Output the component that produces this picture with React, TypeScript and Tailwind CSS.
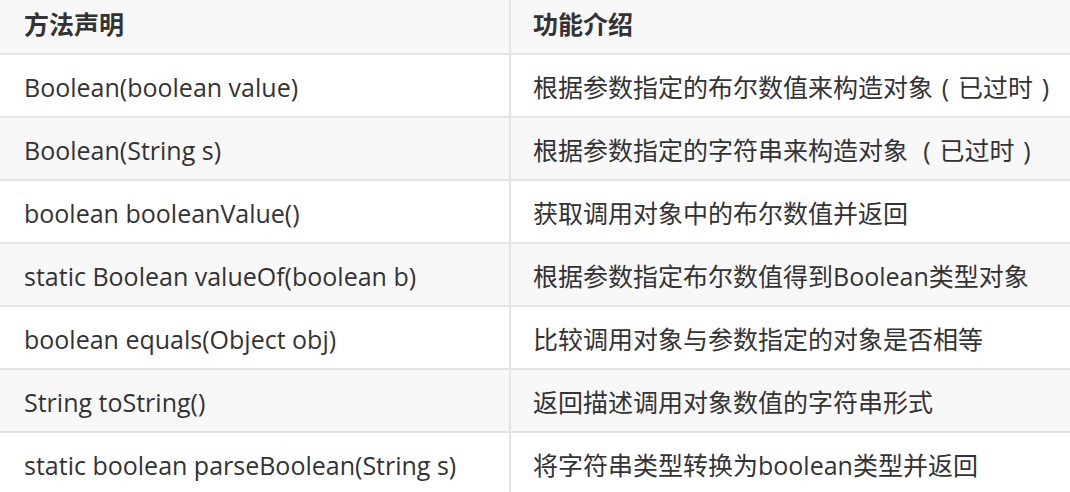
import React from "react";

const Paren: React.FC<{ ch: string }> = ({ ch }) => (
  <span className="inline-block w-[1em] text-center">{ch}</span>
);

const rows: [string, React.ReactNode][] = [
  [
    "Boolean(boolean value)",
    <>
      根据参数指定的布尔数值来构造对象<Paren ch="(" />已过时<Paren ch=")" />
    </>,
  ],
  [
    "Boolean(String s)",
    <>
      根据参数指定的字符串来构造对象 <Paren ch="(" />已过时<Paren ch=")" />
    </>,
  ],
  ["boolean booleanValue()", "获取调用对象中的布尔数值并返回"],
  ["static Boolean valueOf(boolean b)", "根据参数指定布尔数值得到Boolean类型对象"],
  ["boolean equals(Object obj)", "比较调用对象与参数指定的对象是否相等"],
  ["String toString()", "返回描述调用对象数值的字符串形式"],
  ["static boolean parseBoolean(String s)", "将字符串类型转换为boolean类型并返回"],
];

const App: React.FC = () => {
  return (
    <div className="w-[1070px] h-[492px] overflow-hidden bg-white text-[#333] font-['Open_Sans','Noto_Sans_CJK_SC',sans-serif] text-[25px]">
      <div className="-mt-[8px]">
        <div className="grid grid-cols-[511px_1fr] h-[63px] bg-[#f8f8f8] border-b-2 border-[#e2e4e7] font-bold">
          <div className="flex items-center pl-6 pt-[4px] border-r-2 border-[#e2e4e7]">方法声明</div>
          <div className="flex items-center pl-[22px] pt-[4px]">功能介绍</div>
        </div>
        {rows.map(([method, desc], i) => (
          <div
            key={method}
            className={`grid grid-cols-[511px_1fr] h-[63px] border-b-2 border-[#e2e4e7] ${
              i % 2 === 1 ? "bg-[#f8f8f8]" : "bg-white"
            }`}
          >
            <div className="flex items-center pl-6 pt-[4px] border-r-2 border-[#e2e4e7] whitespace-nowrap">
              {method}
            </div>
            <div className="flex items-center pl-[22px] pt-[4px] whitespace-nowrap">
              <span>{desc}</span>
            </div>
          </div>
        ))}
      </div>
    </div>
  );
};

export default App;
